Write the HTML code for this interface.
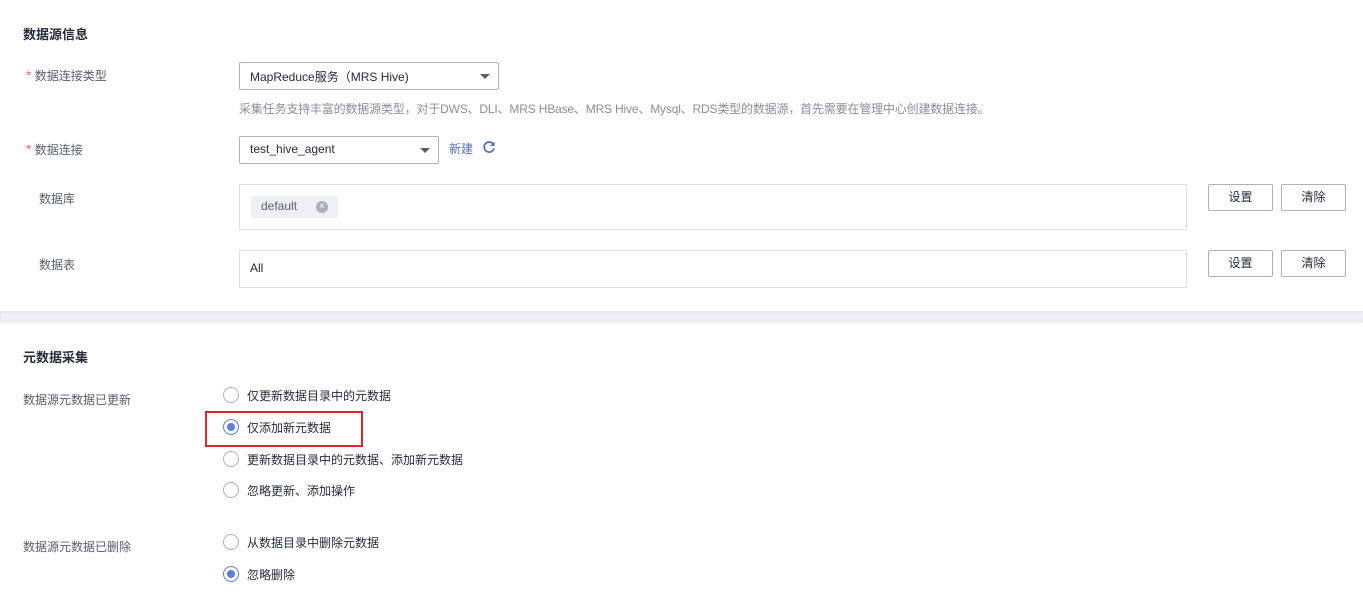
<!DOCTYPE html>
<html><head><meta charset="utf-8">
<style>
*{margin:0;padding:0;box-sizing:border-box}
body{width:1363px;height:598px;background:#fff;font-family:"Liberation Sans","Noto Sans CJK SC",sans-serif;font-size:12px;color:#252b3a;position:relative;overflow:hidden}
.a{position:absolute;white-space:nowrap}
.h{font-weight:bold;font-size:13px;color:#252b3a}
.lbl{color:#575d6c}
.star{color:#f66f6a;font-size:14px}
.box{position:absolute;border:1px solid #adb0b8;border-radius:2px;background:#fff}
.inbox{position:absolute;border:1px solid #dfe1e6;background:#fff}
.btn{position:absolute;border:1px solid #adb0b8;border-radius:2px;background:#fff;width:65px;height:27px;text-align:center;line-height:25px;color:#252b3a}
.caret{position:absolute;width:0;height:0;border-left:5px solid transparent;border-right:5px solid transparent;border-top:5px solid #575d6c}
.r{position:absolute;width:16px;height:16px;border:1px solid #adb0b8;border-radius:50%;background:#fff}
.r.on{border-color:#5e7ce0}
.r.on::after{content:"";position:absolute;left:3px;top:3px;width:8px;height:8px;border-radius:50%;background:#5e7ce0}
</style></head><body>
<div class="a h" style="left:23px;top:24px">数据源信息</div>

<div class="a lbl" style="left:26px;top:67px"><span class="star">*</span> 数据连接类型</div>
<div class="box" style="left:239px;top:62px;width:260px;height:28px"></div>
<div class="a" style="left:250px;top:68px">MapReduce服务（MRS Hive)</div>
<div class="caret" style="left:480px;top:74px"></div>
<div class="a" style="left:239px;top:100px;color:#8a8e99;letter-spacing:-0.17px">采集任务支持丰富的数据源类型，对于DWS、DLI、MRS HBase、MRS Hive、Mysql、RDS类型的数据源，首先需要在管理中心创建数据连接。</div>

<div class="a lbl" style="left:26px;top:141px"><span class="star">*</span> 数据连接</div>
<div class="box" style="left:239px;top:136px;width:200px;height:28px"></div>
<div class="a" style="left:250px;top:142px">test_hive_agent</div>
<div class="caret" style="left:420px;top:148px"></div>
<div class="a" style="left:449px;top:140px;color:#526ecc">新建</div>
<svg class="a" style="left:482px;top:140px" width="14" height="14" viewBox="0 0 14 14"><path d="M11.5 4.5A5 5 0 1 0 12 8.5" fill="none" stroke="#526ecc" stroke-width="1.8"/><path d="M12.5 1.5v4.5h-4.5z" fill="#526ecc"/></svg>

<div class="a lbl" style="left:39px;top:190px">数据库</div>
<div class="inbox" style="left:239px;top:184px;width:948px;height:46px"></div>
<div class="a" style="left:251px;top:196px;width:87px;height:22px;background:#eef0f5;border-radius:2px"></div>
<div class="a" style="left:261px;top:199px;color:#575d6c">default</div>
<div class="a" style="left:316px;top:201px;width:12px;height:12px;border-radius:50%;background:#adb0b8;color:#fff;font-size:10px;line-height:12px;text-align:center">×</div>
<div class="btn" style="left:1208px;top:184px">设置</div>
<div class="btn" style="left:1281px;top:184px">清除</div>

<div class="a lbl" style="left:39px;top:256px">数据表</div>
<div class="inbox" style="left:239px;top:250px;width:948px;height:38px"></div>
<div class="a" style="left:250px;top:261px">All</div>
<div class="btn" style="left:1208px;top:250px">设置</div>
<div class="btn" style="left:1281px;top:250px">清除</div>

<div class="a" style="left:0;top:311px;width:1363px;height:12px;background:#eef0f5;box-shadow:inset 0 1px 2px rgba(0,0,0,0.05)"></div>

<div class="a h" style="left:23px;top:347px">元数据采集</div>

<div class="a lbl" style="left:23px;top:391px">数据源元数据已更新</div>
<div class="r" style="left:223px;top:387px"></div><div class="a" style="left:247px;top:387px">仅更新数据目录中的元数据</div>
<div class="a" style="left:205px;top:411px;width:158px;height:36px;border:2px solid #e0242b"></div>
<div class="r on" style="left:223px;top:419px"></div><div class="a" style="left:247px;top:419px">仅添加新元数据</div>
<div class="r" style="left:223px;top:451px"></div><div class="a" style="left:247px;top:451px">更新数据目录中的元数据、添加新元数据</div>
<div class="r" style="left:223px;top:482px"></div><div class="a" style="left:247px;top:482px">忽略更新、添加操作</div>

<div class="a lbl" style="left:23px;top:538px">数据源元数据已删除</div>
<div class="r" style="left:223px;top:534px"></div><div class="a" style="left:247px;top:534px">从数据目录中删除元数据</div>
<div class="r on" style="left:223px;top:566px"></div><div class="a" style="left:247px;top:566px">忽略删除</div>
</body></html>
